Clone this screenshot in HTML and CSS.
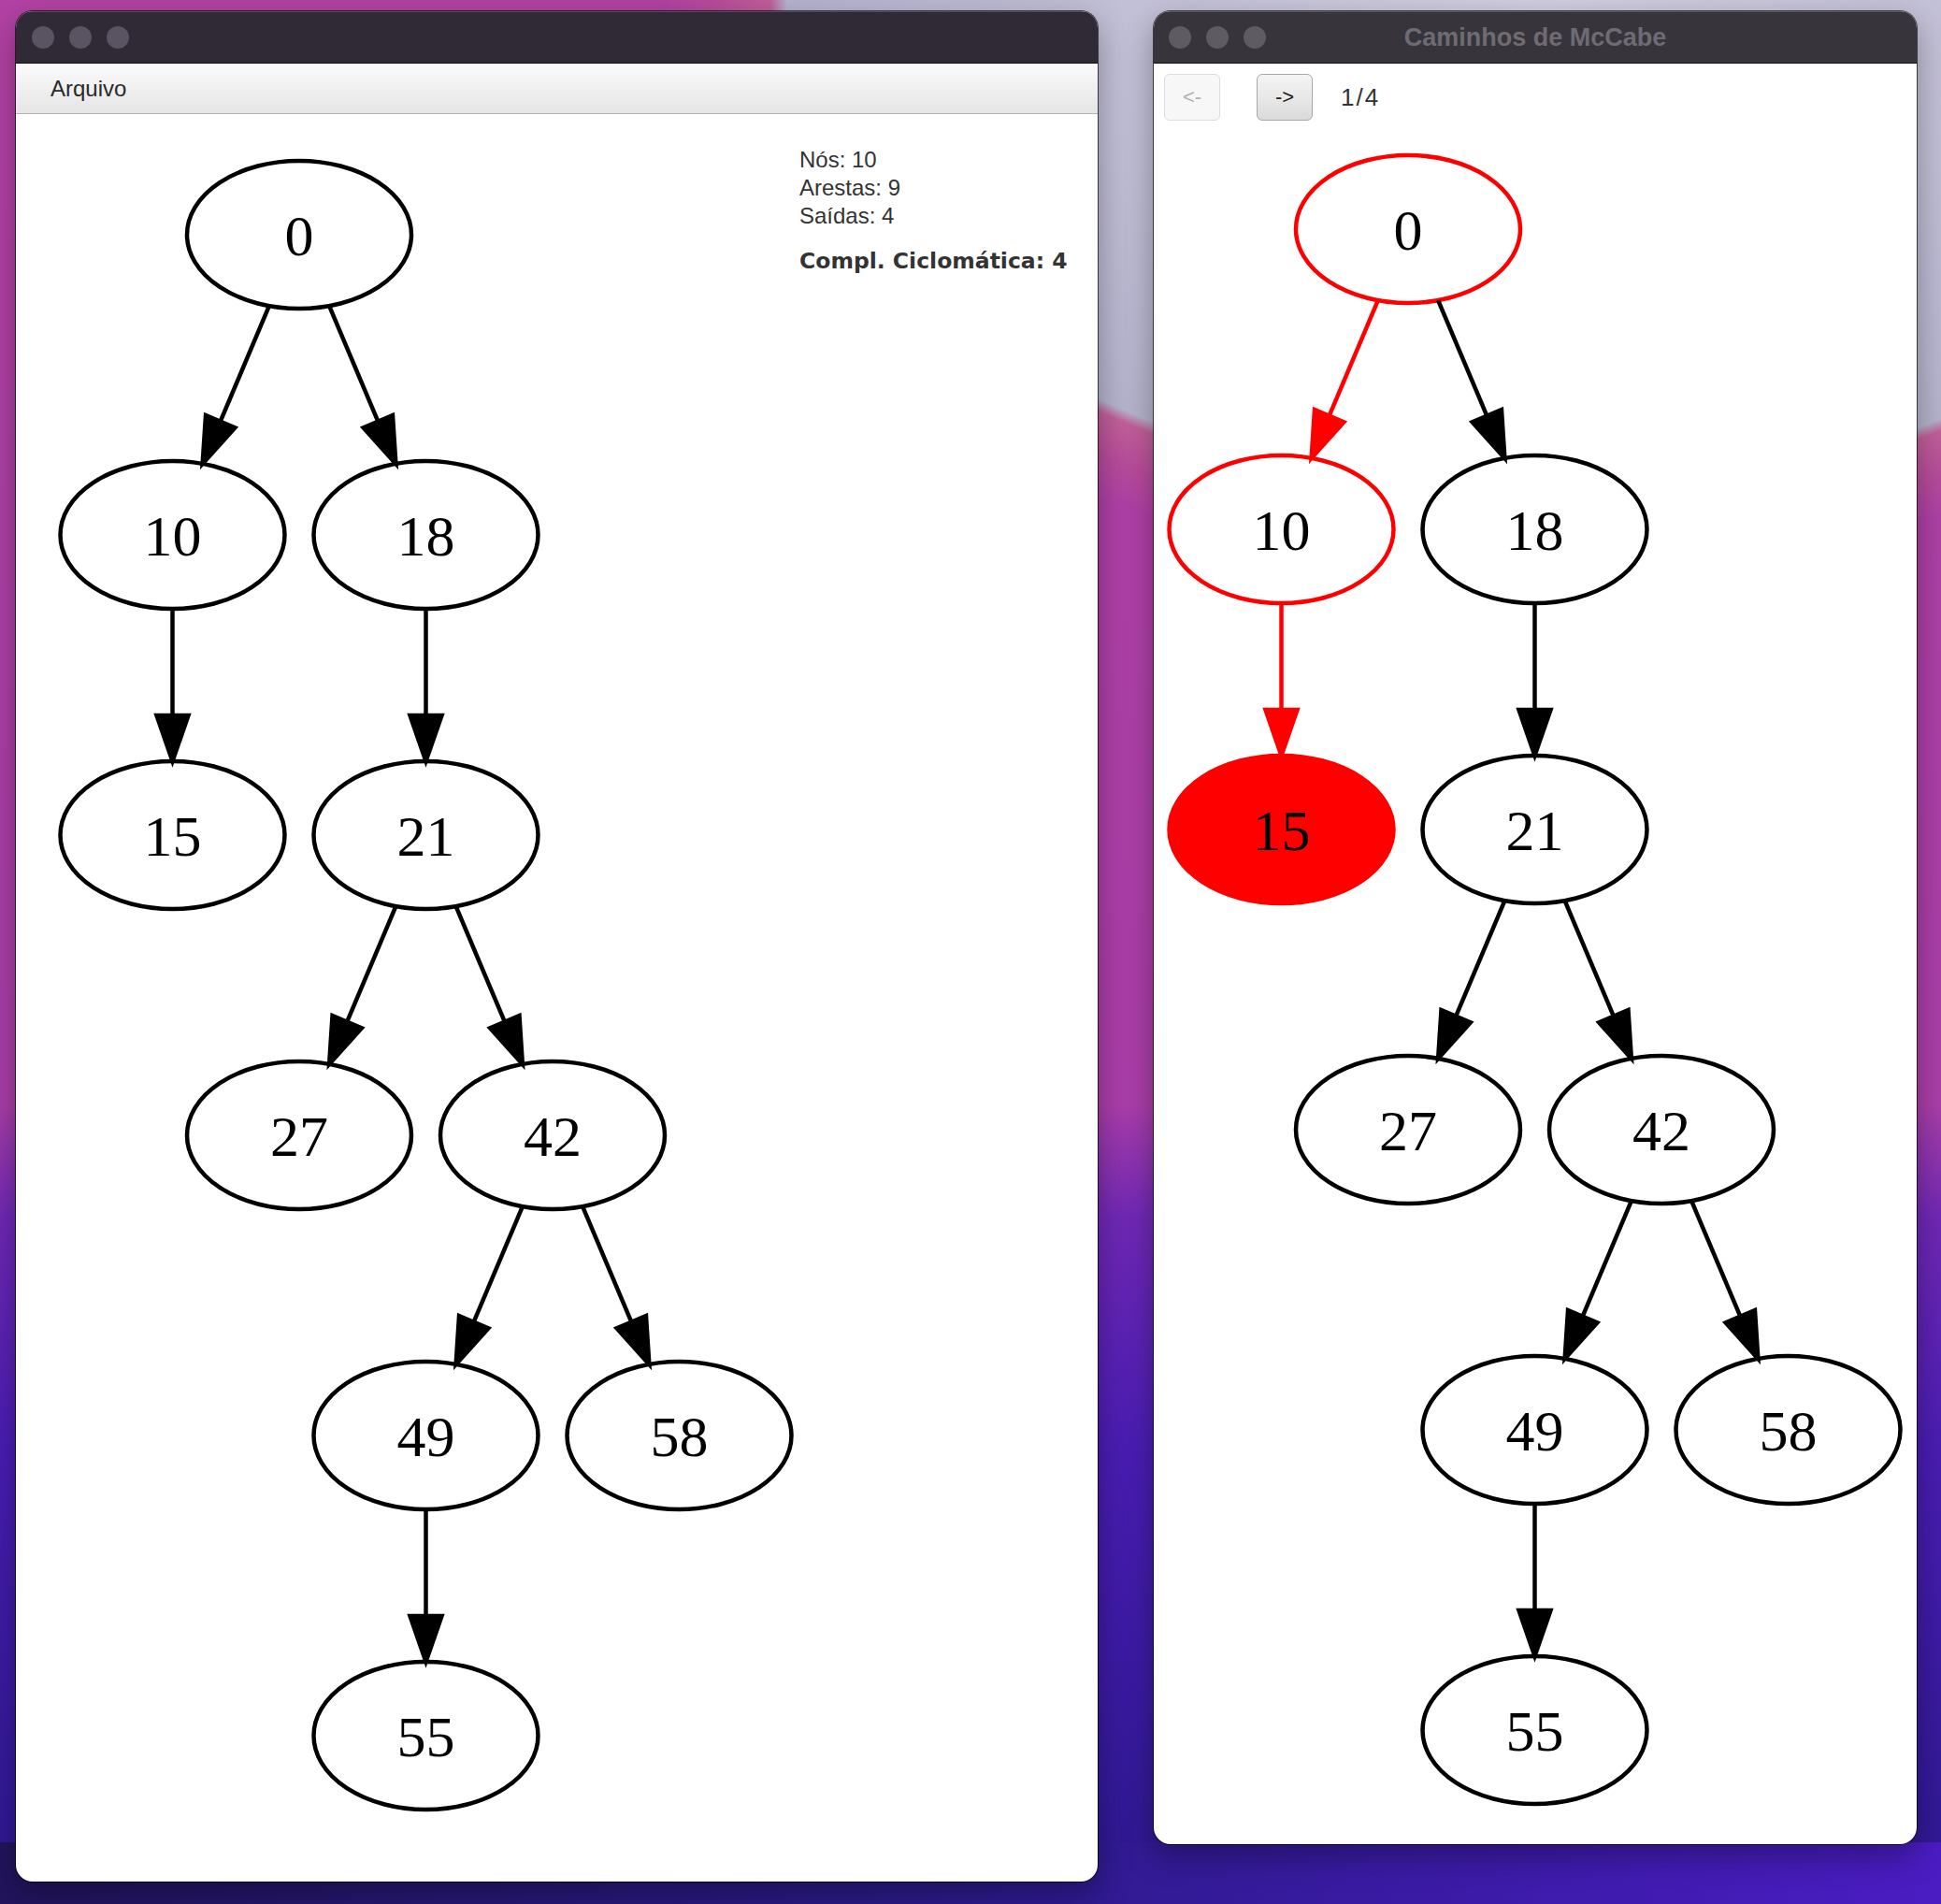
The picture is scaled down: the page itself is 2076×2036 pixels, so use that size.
FILE: index.html
```html
<!DOCTYPE html>
<html lang="pt">
<head>
<meta charset="utf-8">
<title>McCabe</title>
<link rel="stylesheet" href="styles.css">
</head>
<body>
<div class="desktop">
  <section class="window win-main">
    <header class="titlebar">
      <div class="lights"><span class="light"></span><span class="light"></span><span class="light"></span></div>
    </header>
    <nav class="menubar"><span class="menu-item">Arquivo</span></nav>
    <div class="main-body">
      <svg class="graph" width="838" height="1888" viewBox="17 122 838 1888">
        <g class="node" transform="translate(320 251)"><ellipse rx="120" ry="79"/><text y="22">0</text></g>
        <g class="node" transform="translate(184.5 572)"><ellipse rx="120" ry="79"/><text y="22">10</text></g>
        <g class="node" transform="translate(455.5 572)"><ellipse rx="120" ry="79"/><text y="22">18</text></g>
        <g class="node" transform="translate(184.5 893)"><ellipse rx="120" ry="79"/><text y="22">15</text></g>
        <g class="node" transform="translate(455.5 893)"><ellipse rx="120" ry="79"/><text y="22">21</text></g>
        <g class="node" transform="translate(320 1214)"><ellipse rx="120" ry="79"/><text y="22">27</text></g>
        <g class="node" transform="translate(591 1214)"><ellipse rx="120" ry="79"/><text y="22">42</text></g>
        <g class="node" transform="translate(455.5 1535)"><ellipse rx="120" ry="79"/><text y="22">49</text></g>
        <g class="node" transform="translate(726.5 1535)"><ellipse rx="120" ry="79"/><text y="22">58</text></g>
        <g class="node" transform="translate(455.5 1856)"><ellipse rx="120" ry="79"/><text y="22">55</text></g>

        <g class="edge" transform="translate(320 251)"><path d="M-32.13 76.12 L-84.31 199.74"/><polygon points="-103.37,244.88 -99.97,193.13 -68.65,206.35"/></g>
        <g class="edge" transform="translate(320 251)"><path d="M32.13 76.12 L84.31 199.74"/><polygon points="103.37,244.88 68.65,206.35 99.97,193.13"/></g>
        <g class="edge" transform="translate(184.5 572)"><path d="M0 79 L0 193"/><polygon points="0,242 -17,193 17,193"/></g>
        <g class="edge" transform="translate(455.5 572)"><path d="M0 79 L0 193"/><polygon points="0,242 -17,193 17,193"/></g>
        <g class="edge" transform="translate(455.5 893)"><path d="M-32.13 76.12 L-84.31 199.74"/><polygon points="-103.37,244.88 -99.97,193.13 -68.65,206.35"/></g>
        <g class="edge" transform="translate(455.5 893)"><path d="M32.13 76.12 L84.31 199.74"/><polygon points="103.37,244.88 68.65,206.35 99.97,193.13"/></g>
        <g class="edge" transform="translate(591 1214)"><path d="M-32.13 76.12 L-84.31 199.74"/><polygon points="-103.37,244.88 -99.97,193.13 -68.65,206.35"/></g>
        <g class="edge" transform="translate(591 1214)"><path d="M32.13 76.12 L84.31 199.74"/><polygon points="103.37,244.88 68.65,206.35 99.97,193.13"/></g>
        <g class="edge" transform="translate(455.5 1535)"><path d="M0 79 L0 193"/><polygon points="0,242 -17,193 17,193"/></g>
      </svg>
      <aside class="stats">
        <div class="stat">Nós: 10</div>
        <div class="stat">Arestas: 9</div>
        <div class="stat">Saídas: 4</div>
        <div class="complexity">Compl. Ciclomática: 4</div>
      </aside>
    </div>
  </section>

  <section class="window win-paths">
    <header class="titlebar titlebar-titled">
      <div class="lights"><span class="light"></span><span class="light"></span><span class="light"></span></div>
      <div class="title">Caminhos de McCabe</div>
      <div class="spacer"></div>
    </header>
    <div class="toolbar">
      <button class="nav-btn" disabled>&lt;-</button>
      <button class="nav-btn nav-next">-&gt;</button>
      <span class="counter">1/4</span>
    </div>
    <svg class="graph" width="814" height="1830" viewBox="48 146 814 1830">
      <g class="node hl" transform="translate(320 251)"><ellipse rx="120" ry="79"/><text y="22">0</text></g>
      <g class="node hl" transform="translate(184.5 572)"><ellipse rx="120" ry="79"/><text y="22">10</text></g>
      <g class="node" transform="translate(455.5 572)"><ellipse rx="120" ry="79"/><text y="22">18</text></g>
      <g class="node hl-fill" transform="translate(184.5 893)"><ellipse rx="120" ry="79"/><text y="22">15</text></g>
      <g class="node" transform="translate(455.5 893)"><ellipse rx="120" ry="79"/><text y="22">21</text></g>
      <g class="node" transform="translate(320 1214)"><ellipse rx="120" ry="79"/><text y="22">27</text></g>
      <g class="node" transform="translate(591 1214)"><ellipse rx="120" ry="79"/><text y="22">42</text></g>
      <g class="node" transform="translate(455.5 1535)"><ellipse rx="120" ry="79"/><text y="22">49</text></g>
      <g class="node" transform="translate(726.5 1535)"><ellipse rx="120" ry="79"/><text y="22">58</text></g>
      <g class="node" transform="translate(455.5 1856)"><ellipse rx="120" ry="79"/><text y="22">55</text></g>

      <g class="edge hl" transform="translate(320 251)"><path d="M-32.13 76.12 L-84.31 199.74"/><polygon points="-103.37,244.88 -99.97,193.13 -68.65,206.35"/></g>
      <g class="edge" transform="translate(320 251)"><path d="M32.13 76.12 L84.31 199.74"/><polygon points="103.37,244.88 68.65,206.35 99.97,193.13"/></g>
      <g class="edge hl" transform="translate(184.5 572)"><path d="M0 79 L0 193"/><polygon points="0,242 -17,193 17,193"/></g>
      <g class="edge" transform="translate(455.5 572)"><path d="M0 79 L0 193"/><polygon points="0,242 -17,193 17,193"/></g>
      <g class="edge" transform="translate(455.5 893)"><path d="M-32.13 76.12 L-84.31 199.74"/><polygon points="-103.37,244.88 -99.97,193.13 -68.65,206.35"/></g>
      <g class="edge" transform="translate(455.5 893)"><path d="M32.13 76.12 L84.31 199.74"/><polygon points="103.37,244.88 68.65,206.35 99.97,193.13"/></g>
      <g class="edge" transform="translate(591 1214)"><path d="M-32.13 76.12 L-84.31 199.74"/><polygon points="-103.37,244.88 -99.97,193.13 -68.65,206.35"/></g>
      <g class="edge" transform="translate(591 1214)"><path d="M32.13 76.12 L84.31 199.74"/><polygon points="103.37,244.88 68.65,206.35 99.97,193.13"/></g>
      <g class="edge" transform="translate(455.5 1535)"><path d="M0 79 L0 193"/><polygon points="0,242 -17,193 17,193"/></g>
    </svg>
  </section>
</div>
</body>
</html>
```

FILE: styles.css
```css
html, body {
  margin: 0;
  padding: 0;
}

body {
  width: 2076px;
  height: 2036px;
  overflow: hidden;
  font-family: "Liberation Sans", Arial, sans-serif;
  background:
    linear-gradient(90deg, #23145e 0%, #2a1a86 45%, #4a1cc2 100%) left bottom / 100% 66px no-repeat,
    radial-gradient(860px 560px at 1650px 0, #d2cfe2 0%, #b6b4ce 94%, #c2609a 96%, #b84c9c 103%, rgba(176, 64, 168, 0) 110%),
    linear-gradient(180deg, #b342a4 0%, #ab3eaa 58%, #7028b6 64%, #4a1db4 76%, #2c1890 100%);
}

.desktop {
  display: flex;
  align-items: flex-start;
  gap: 60px;
  padding: 12px 0 0 17px;
}

.window {
  background: #ffffff;
  border-radius: 18px;
  overflow: hidden;
  box-shadow: 0 0 0 1px rgba(0, 0, 0, 0.65), 0 12px 34px rgba(0, 0, 0, 0.35);
  display: flex;
  flex-direction: column;
  flex: none;
}

.win-main {
  width: 1157px;
  height: 2000px;
}

.win-paths {
  width: 816px;
  height: 1960px;
}

.titlebar {
  height: 56px;
  flex: none;
  background: #2f2a36;
  box-shadow: inset 0 1px 0 rgba(255, 255, 255, 0.18), inset 0 -1px 0 #111;
  display: flex;
  align-items: center;
  padding-left: 17px;
  box-sizing: border-box;
}

.win-paths .titlebar {
  background: #38343b;
  padding: 0 16px;
}

.lights {
  display: flex;
  gap: 16px;
}

.light {
  width: 24px;
  height: 24px;
  border-radius: 50%;
  background: #5a5362;
}

.win-paths .light {
  background: #5f5b63;
}

.titlebar-titled {
  display: grid;
  grid-template-columns: 1fr auto 1fr;
  align-items: center;
}

.title {
  font-family: "Liberation Sans", Arial, sans-serif;
  font-weight: bold;
  font-size: 27px;
  color: #6f6b73;
  line-height: 56px;
}

.menubar {
  height: 53px;
  flex: none;
  border-bottom: 1px solid #b3b3b3;
  background: linear-gradient(180deg, #fbfbfb 0%, #f0f0f0 50%, #e5e5e5 100%);
  display: flex;
  align-items: center;
  padding-left: 37px;
}

.menu-item {
  font-size: 24px;
  color: #2a2a2a;
  line-height: 53px;
}

.main-body {
  display: flex;
  align-items: flex-start;
  flex: 1;
  overflow: hidden;
}

.graph {
  display: block;
  flex: none;
}

.stats {
  padding-top: 34px;
  white-space: nowrap;
  color: #333333;
}

.stat {
  font-family: "Liberation Sans", Arial, sans-serif;
  font-size: 24px;
  line-height: 30px;
}

.complexity {
  margin-top: 18px;
  font-family: "DejaVu Sans", Verdana, sans-serif;
  font-weight: bold;
  font-size: 23.5px;
  line-height: 30px;
  color: #333333;
}

.toolbar {
  height: 72px;
  flex: none;
  display: flex;
  align-items: center;
  padding-left: 11px;
}

.nav-btn {
  width: 60px;
  height: 50px;
  margin: 0;
  padding: 0;
  border-radius: 6px;
  font-family: "Liberation Sans", Arial, sans-serif;
  font-size: 22px;
  box-sizing: border-box;
  border: 1px solid #dddddd;
  background: #f7f7f7;
  color: #b0b0b0;
}

.nav-next {
  margin-left: 39px;
  border: 1px solid #a9a9a9;
  background: linear-gradient(180deg, #f4f4f4 0%, #e6e6e6 60%, #dadada 100%);
  color: #1e1e1e;
}

.counter {
  margin-left: 30px;
  font-size: 26px;
  letter-spacing: 2px;
  color: #333333;
}

.node ellipse {
  fill: #ffffff;
  stroke: #000000;
  stroke-width: 4.5;
}

.node text {
  font-family: "Liberation Serif", "Times New Roman", serif;
  font-size: 62px;
  text-anchor: middle;
  fill: #000000;
}

.node.hl ellipse {
  stroke: #ff0000;
}

.node.hl-fill ellipse {
  fill: #ff0000;
  stroke: #ff0000;
}

.edge path {
  fill: none;
  stroke: #000000;
  stroke-width: 4.5;
}

.edge polygon {
  fill: #000000;
  stroke: #000000;
  stroke-width: 4.5;
}

.edge.hl path {
  stroke: #ff0000;
}

.edge.hl polygon {
  fill: #ff0000;
  stroke: #ff0000;
}
```
